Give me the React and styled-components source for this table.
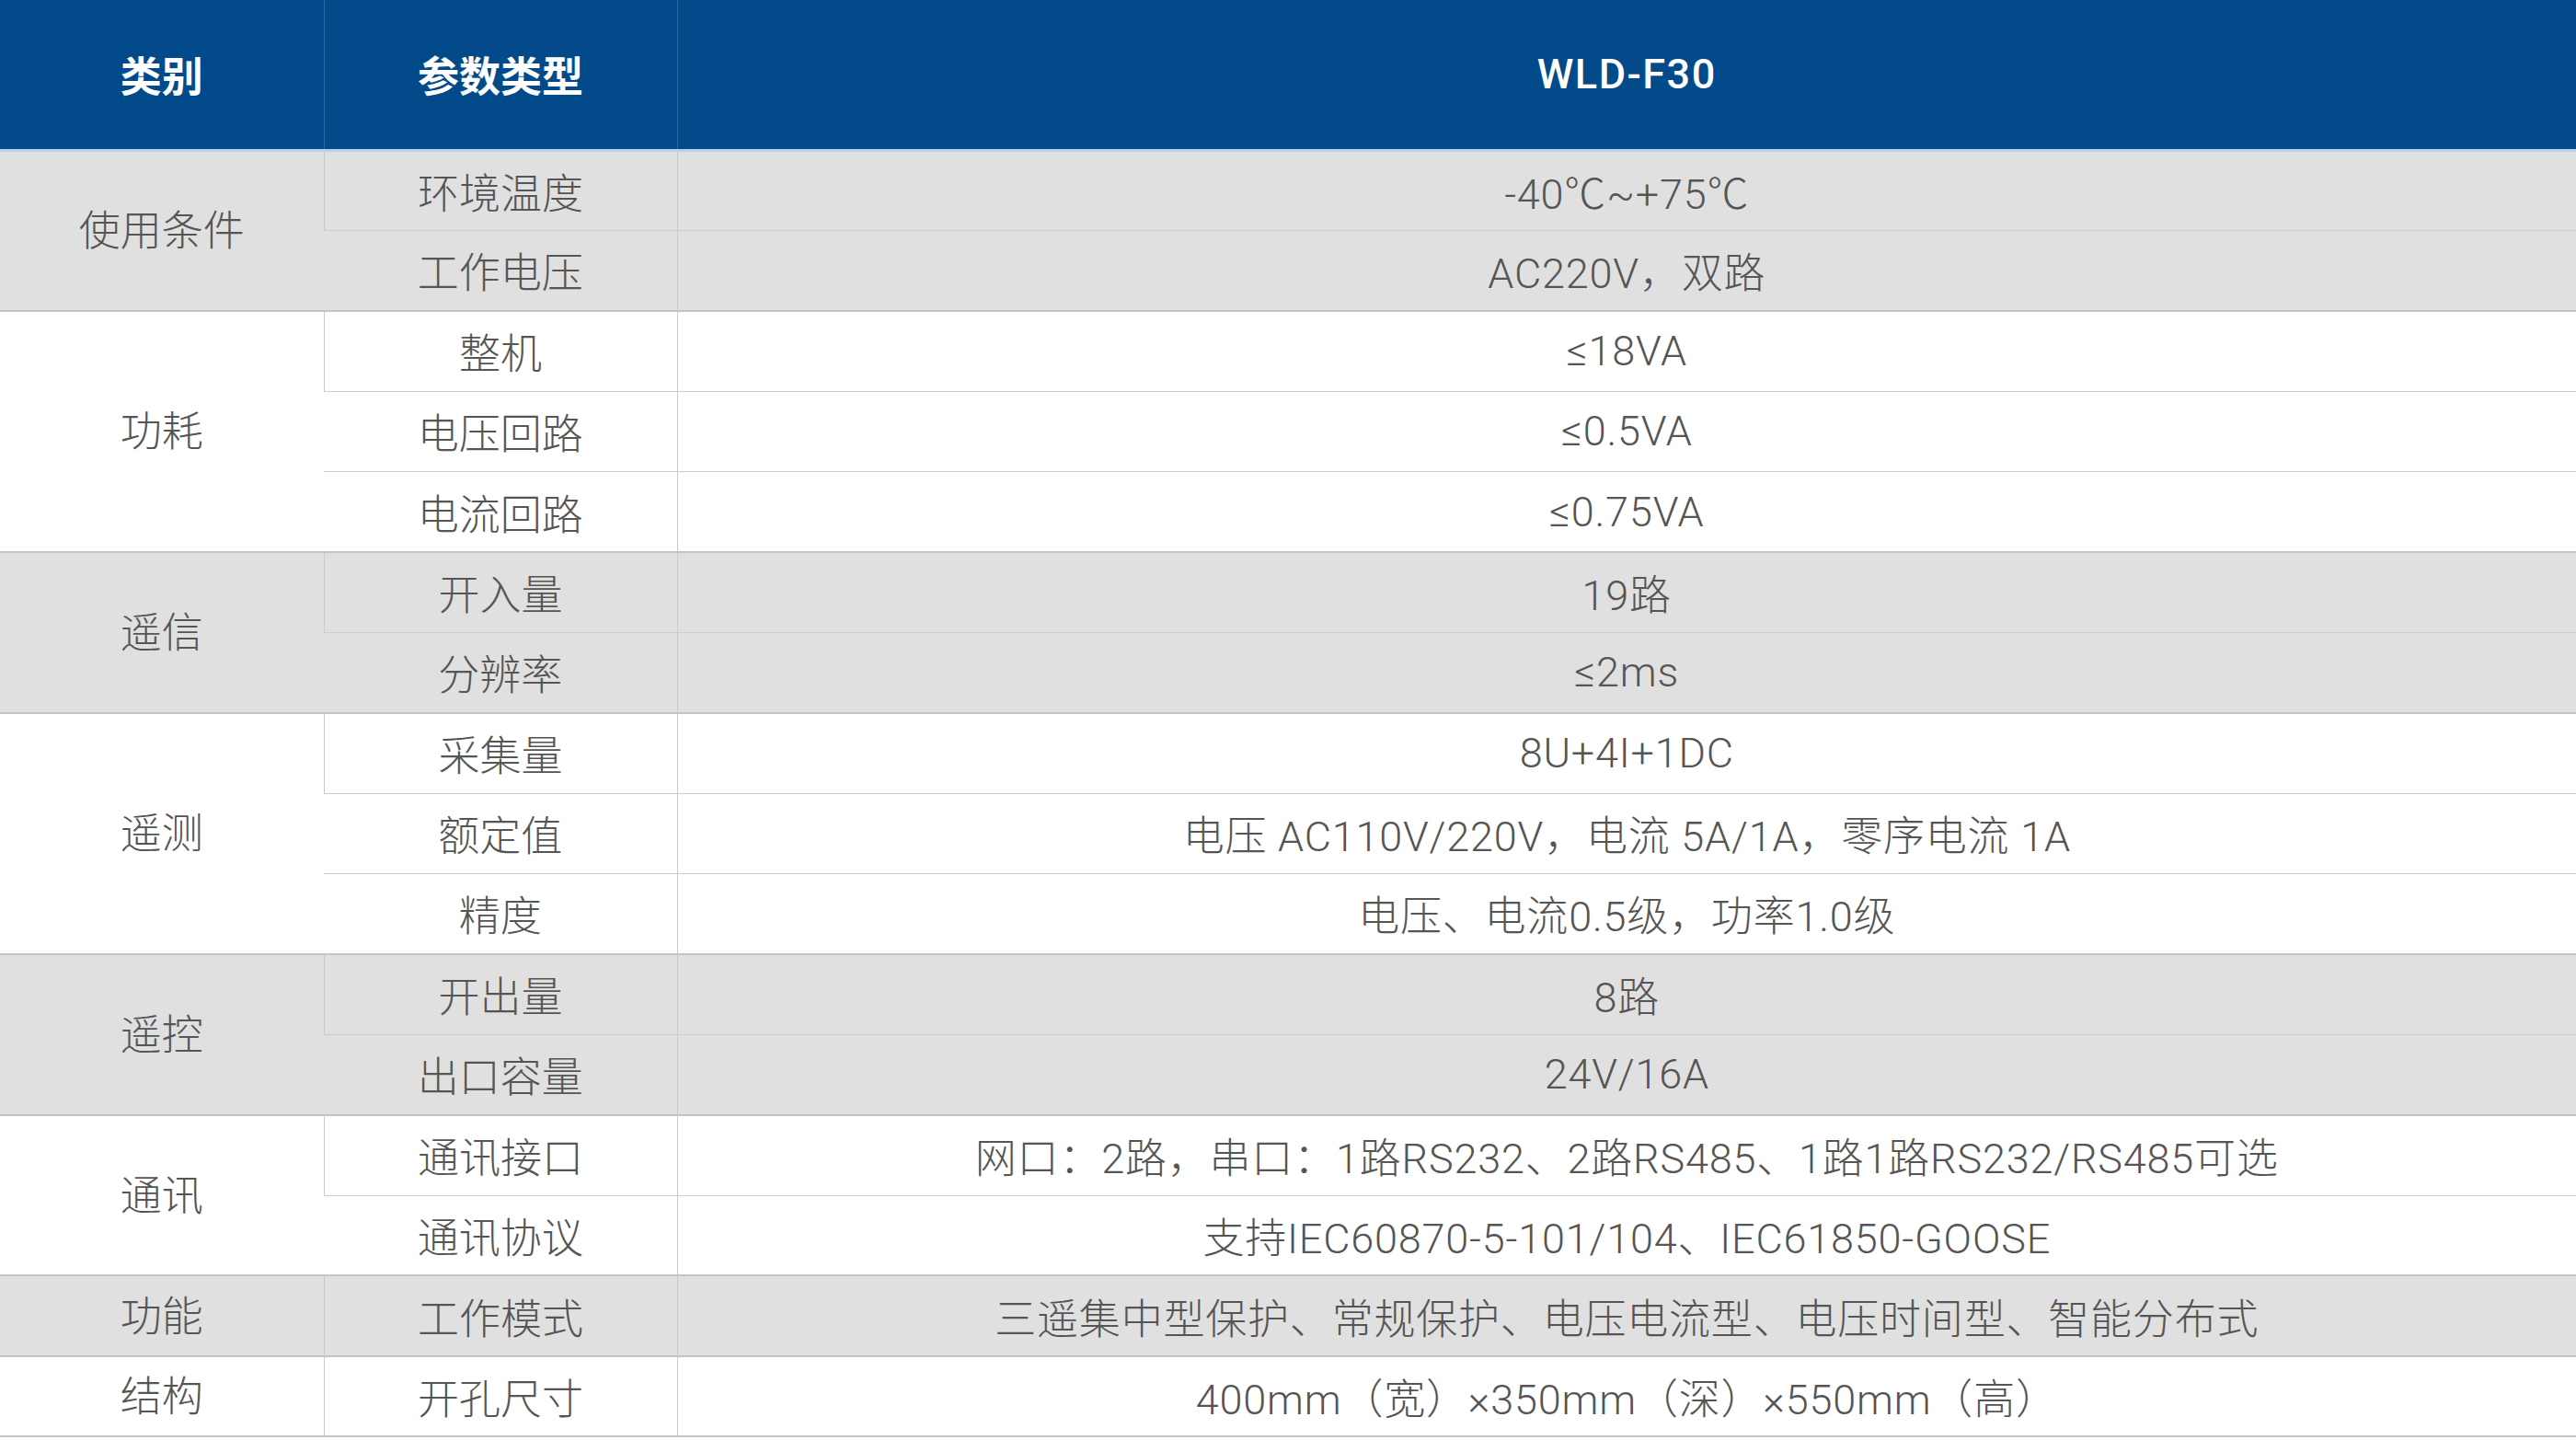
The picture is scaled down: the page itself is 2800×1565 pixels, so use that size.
import React from "react";
import styled, { createGlobalStyle } from "styled-components";

const Global = createGlobalStyle`
  html, body { margin: 0; padding: 0; background: #fff; }
  body { font-family: Roboto, "Noto Sans CJK SC", sans-serif; }
`;

const Table = styled.table`
  width: 2800px;
  border-collapse: collapse;
  table-layout: fixed;
  font-family: Roboto, "Noto Sans CJK SC", sans-serif;
`;

const Col = styled.col`
  width: ${(p) => p.$w};
`;

const HeadRow = styled.tr`
  height: 163px;
  background: #034a8a;
`;

const Th = styled.th`
  color: #fff;
  font-size: 45px;
  font-weight: 700;
  text-align: center;
  vertical-align: middle;
  padding: 0;
  border-left: 1px solid #2c66a0;
  border-bottom: 3px solid #b5d3ee;
  &:first-child { border-left: none; }
`;

const ModelName = styled.span`
  font-weight: 500;
  letter-spacing: 1.5px;
`;

const Row = styled.tr`
  height: 87.4px;
  background: ${(p) => (p.$gray ? "#e0e0e0" : "#ffffff")};
`;

const Cell = styled.td`
  color: #555;
  font-size: 45px;
  font-weight: 300;
  letter-spacing: ${(p) => (p.$value ? "0.8px" : "0")};
  text-align: center;
  vertical-align: middle;
  padding: 0 0 ${(p) => (p.$cat ? "6px" : "0")} 0;
  white-space: nowrap;
  border-left: 1px solid #c9c9c9;
  border-top: ${(p) => (p.$groupStart ? "2px solid #c4c4c4" : "1px solid #cdcdcd")};
  &:first-child { border-left: none; }
`;

const Body = styled.tbody`
  & tr:last-child td { border-bottom: 2px solid #c4c4c4; }
`;

const groups = [
  { cat: "使用条件", gray: true, rows: [["环境温度", "-40℃~+75℃"], ["工作电压", "AC220V，双路"]] },
  { cat: "功耗", gray: false, rows: [["整机", "≤18VA"], ["电压回路", "≤0.5VA"], ["电流回路", "≤0.75VA"]] },
  { cat: "遥信", gray: true, rows: [["开入量", "19路"], ["分辨率", "≤2ms"]] },
  { cat: "遥测", gray: false, rows: [["采集量", "8U+4I+1DC"], ["额定值", "电压 AC110V/220V，电流 5A/1A，零序电流 1A"], ["精度", "电压、电流0.5级，功率1.0级"]] },
  { cat: "遥控", gray: true, rows: [["开出量", "8路"], ["出口容量", "24V/16A"]] },
  { cat: "通讯", gray: false, rows: [["通讯接口", "网口：2路，串口：1路RS232、2路RS485、1路1路RS232/RS485可选"], ["通讯协议", "支持IEC60870-5-101/104、IEC61850-GOOSE"]] },
  { cat: "功能", gray: true, rows: [["工作模式", "三遥集中型保护、常规保护、电压电流型、电压时间型、智能分布式"]] },
  { cat: "结构", gray: false, rows: [["开孔尺寸", "400mm（宽）×350mm（深）×550mm（高）"]] },
];

export default function App() {
  return (
    <>
      <Global />
      <Table>
        <colgroup>
          <Col $w="352px" />
          <Col $w="384px" />
          <Col $w="2064px" />
        </colgroup>
        <thead>
          <HeadRow>
            <Th>类别</Th>
            <Th>参数类型</Th>
            <Th><ModelName>WLD-F30</ModelName></Th>
          </HeadRow>
        </thead>
        <Body>
          {groups.flatMap((g, gi) =>
            g.rows.map((r, ri) => (
              <Row key={`${gi}-${ri}`} $gray={g.gray}>
                {ri === 0 && (
                  <Cell rowSpan={g.rows.length} $groupStart={gi > 0} $cat>
                    {g.cat}
                  </Cell>
                )}
                <Cell $groupStart={ri === 0 && gi > 0}>{r[0]}</Cell>
                <Cell $groupStart={ri === 0 && gi > 0} $value>{r[1]}</Cell>
              </Row>
            ))
          )}
        </Body>
      </Table>
    </>
  );
}
